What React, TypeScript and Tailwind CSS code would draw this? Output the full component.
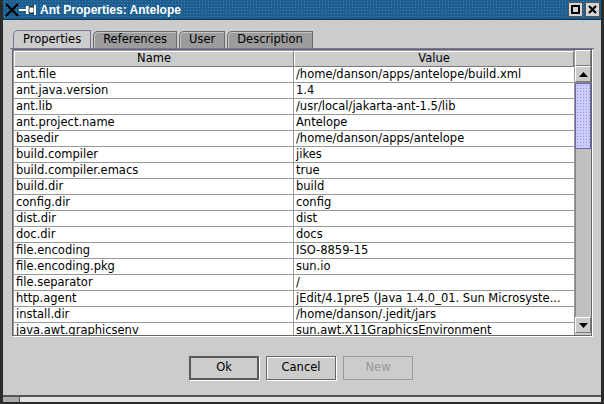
import React from 'react';

const rows: [string, string][] = [
  ['ant.file', '/home/danson/apps/antelope/build.xml'],
  ['ant.java.version', '1.4'],
  ['ant.lib', '/usr/local/jakarta-ant-1.5/lib'],
  ['ant.project.name', 'Antelope'],
  ['basedir', '/home/danson/apps/antelope'],
  ['build.compiler', 'jikes'],
  ['build.compiler.emacs', 'true'],
  ['build.dir', 'build'],
  ['config.dir', 'config'],
  ['dist.dir', 'dist'],
  ['doc.dir', 'docs'],
  ['file.encoding', 'ISO-8859-15'],
  ['file.encoding.pkg', 'sun.io'],
  ['file.separator', '/'],
  ['http.agent', 'jEdit/4.1pre5 (Java 1.4.0_01. Sun Microsyste...'],
  ['install.dir', '/home/danson/.jedit/jars'],
  ['java.awt.graphicsenv', 'sun.awt.X11GraphicsEnvironment'],
];

const tabs = ['Properties', 'References', 'User', 'Description'];

function TitleBar() {
  return (
    <div className="h-[20px] flex items-center bg-[#1d5e8e] bg-[radial-gradient(#3a86bd_1px,transparent_1px)] bg-[length:3px_3px] border-b border-[#0b3556]">
      <svg width="34" height="16" viewBox="0 0 34 16" className="ml-[1px] shrink-0">
        <path d="M2 2 L14 14 M14 2 L2 14" stroke="#000" strokeWidth="2.2" />
        <path d="M15 8 H22" stroke="#fff" strokeWidth="2" />
        <rect x="22" y="4" width="3" height="8" fill="#fff" />
        <rect x="25" y="5" width="5" height="6" fill="#fff" stroke="#000" strokeWidth="0.8" />
        <rect x="30" y="3" width="2" height="10" fill="#fff" />
      </svg>
      <span className="ml-[2px] text-white font-bold text-[12px] font-['Liberation_Sans',sans-serif] leading-none">
        Ant Properties: Antelope
      </span>
      <div className="flex-1" />
      <div className="flex gap-[2px] mr-[1px]">
        <div className="w-[15px] h-[15px] bg-[#d6d6d6] border border-[#555] flex items-center justify-center">
          <div className="w-[9px] h-[9px] border-[2px] border-black" />
        </div>
        <div className="w-[15px] h-[15px] bg-[#d6d6d6] border border-[#555] flex items-center justify-center">
          <svg width="9" height="9" viewBox="0 0 9 9">
            <path d="M1 1 L8 8 M8 1 L1 8" stroke="#000" strokeWidth="2.2" />
          </svg>
        </div>
      </div>
    </div>
  );
}

function Tabs() {
  return (
    <div className="flex items-end h-[18px] pl-[10px] gap-[2px]">
      {tabs.map((t, i) => (
        <div
          key={t}
          className={
            i === 0
              ? 'h-[18px] px-[9px] flex items-center bg-[#cccccc] border border-[#7676a6] rounded-tl-[5px] border-b-0'
              : 'h-[17px] px-[9px] flex items-center bg-[#9c9c9c] border border-[#6a6a6a] border-b-0 rounded-tl-[5px] shadow-[inset_1px_1px_0_#c4c4c4]'
          }
        >
          {t}
        </div>
      ))}
    </div>
  );
}

function Arrow({ up }: { up: boolean }) {
  return (
    <div className="h-[16px] shrink-0 bg-[#cccccc] border border-white border-r-[#7a7a7a] border-b-[#7a7a7a] flex items-center justify-center">
      <svg width="9" height="5" viewBox="0 0 9 5">
        <path d={up ? 'M0 5 L4.5 0 L9 5 Z' : 'M0 0 L4.5 5 L9 0 Z'} fill="#000" />
      </svg>
    </div>
  );
}

function Table() {
  return (
    <div className="mx-[9px] h-[287px] border border-[#666] shadow-[1px_1px_0_#fff] flex overflow-hidden">
      <div className="flex-1 flex flex-col bg-white overflow-hidden border-l border-t border-[#999]">
        <div className="flex h-[16px] shrink-0 bg-[#cccccc]">
          <div className="w-[280px] flex items-center justify-center border border-white border-r-[#7a7a7a] border-b-[#7a7a7a]">
            Name
          </div>
          <div className="flex-1 flex items-center justify-center border border-white border-r-[#7a7a7a] border-b-[#7a7a7a]">
            Value
          </div>
        </div>
        {rows.map(([k, v]) => (
          <div key={k} className="flex h-[16px] shrink-0 border-b border-[#999]">
            <div className="w-[280px] pl-[2px] border-r border-[#999] leading-[15px] whitespace-nowrap overflow-hidden">
              {k}
            </div>
            <div className="flex-1 pl-[2px] leading-[15px] whitespace-nowrap overflow-hidden">{v}</div>
          </div>
        ))}
      </div>
      <div className="w-[17px] flex flex-col bg-[#cccccc] border-l border-[#999]">
        <div className="h-[16px] shrink-0 border border-white border-r-[#7a7a7a] border-b-[#7a7a7a]" />
        <Arrow up />
        <div className="flex-1 flex flex-col bg-[#c0c0c0] shadow-[inset_1px_1px_0_#888]">
          <div className="h-[66px] mt-[1px] bg-[#ccccff] bg-[radial-gradient(#9999cc_0.8px,transparent_0.8px)] bg-[length:3px_3px] border border-[#6666aa]" />
        </div>
        <Arrow up={false} />
        <div className="h-[2px] shrink-0" />
      </div>
    </div>
  );
}

function Btn({ label, kind }: { label: string; kind: 'default' | 'normal' | 'disabled' }) {
  const cls =
    kind === 'default'
      ? 'border-[2px] border-[#5a5a5a] shadow-[1px_1px_0_#fff] text-black'
      : kind === 'normal'
        ? 'border border-[#666] shadow-[inset_1px_1px_0_#fff,1px_1px_0_#fff] text-black'
        : 'border border-[#999] text-[#999]';
  return (
    <div className={'w-[70px] h-[24px] flex items-center justify-center bg-[#cccccc] ' + cls}>{label}</div>
  );
}

export default function App() {
  return (
    <div className="w-[604px] h-[404px] bg-[#cccccc] flex flex-col border-l-[3px] border-r-[3px] border-b-[2px] border-[#2b2b2b] font-['DejaVu_Sans',sans-serif] text-[11.5px] text-black overflow-hidden">
      <TitleBar />
      <div className="flex-1 flex flex-col pt-[10px]">
        <Tabs />
        <div className="border-t border-[#7676a6] mx-[7px]" />
        <div className="mt-[0px]">
          <Table />
        </div>
        <div className="flex justify-center gap-[7px] mt-[20px] pr-[2px]">
          <Btn label="Ok" kind="default" />
          <Btn label="Cancel" kind="normal" />
          <Btn label="New" kind="disabled" />
        </div>
        <div className="flex-1" />
        <div className="h-[7px] border-t-[2px] border-[#555] flex">
          <div className="w-[17px] bg-[#aaaaaa] border-r border-[#555]" />
          <div className="flex-1 bg-[#e2e2e2]" />
        </div>
      </div>
    </div>
  );
}
